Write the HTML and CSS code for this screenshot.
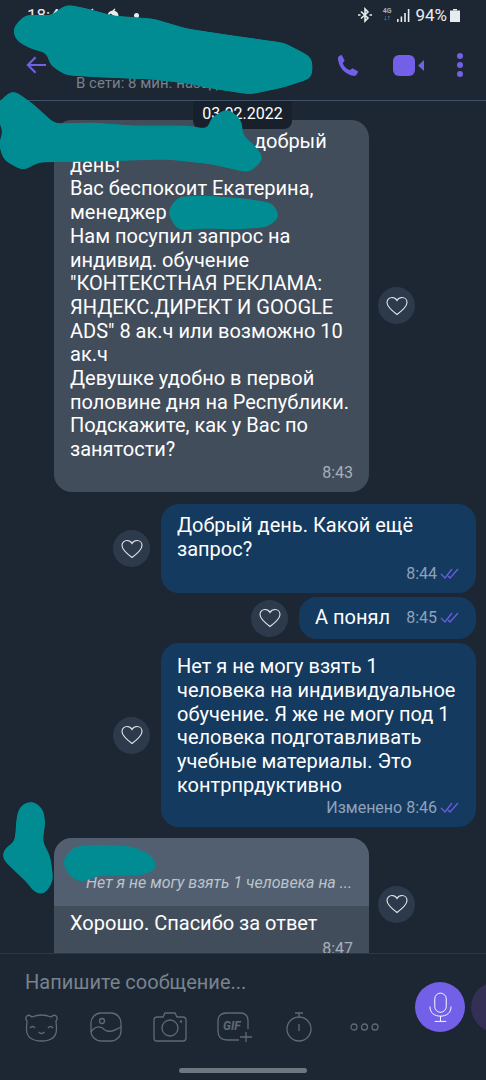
FILE: index.html
```html
<!DOCTYPE html>
<html>
<head>
    <title>Чат</title>
    <link rel="stylesheet" href="styles.css">
</head>
<body>
<div class="phone">
    <div class="top">
        <div class="status-bar">
            <div class="status-left">
                <span class="clock">18:43</span>
                <svg class="st-icon" viewBox="0 0 14 14"><circle cx="7" cy="8" r="5" fill="#e8ecf0"/><path d="M7 3 L9 1" stroke="#e8ecf0" stroke-width="1.5"/></svg>
                <svg class="st-icon" viewBox="0 0 14 14"><circle cx="7" cy="8" r="5.5" fill="#e8ecf0"/><path d="M4 6 L10 10" stroke="#1d2733" stroke-width="1.5"/><path d="M7 3 L9 1" stroke="#e8ecf0" stroke-width="1.5"/></svg>
                <span class="st-dot"></span>
            </div>
            <div class="status-right">
                <svg class="bt" viewBox="0 0 14 16" fill="none" stroke="#e8ecf0" stroke-width="1.6"><path d="M3 4.5 L10 11 L7 14 V2 L10 5 L3 11.5"/><path d="M0 8 H2.500 M11.500 8 H14"/></svg>
                <span class="net">4G<br>↓↑</span>
                <svg class="signal" viewBox="0 0 13 13" fill="#e8ecf0"><rect x="0" y="10" width="1.6" height="3"/><rect x="3.6" y="7.5" width="1.6" height="5.5"/><rect x="7.2" y="4" width="1.6" height="9"/><rect x="10.8" y="0" width="1.6" height="13"/></svg>
                <span class="percent">94%</span>
                <svg class="battery" viewBox="0 0 10 13" fill="#e8ecf0"><rect x="3" y="0" width="4" height="1.5"/><rect x="0" y="1.5" width="10" height="11.5"/></svg>
            </div>
        </div>
        <div class="app-bar">
            <svg class="back" viewBox="0 0 22 20" fill="none" stroke="#7360e8" stroke-width="2.2"><path d="M21 10 H2 M10 2 L2 10 L10 18"/></svg>
            <div class="contact">В сети: 8 мин. назад</div>
            <svg class="phone-icon" viewBox="0 0 22 22" fill="#7360e8"><path d="M1 3 C1 1.5 3.5 0 5 0 L8 6 L6 8.5 C7 12 10 15 13.5 16 L16 14 L22 17 C22 19 20 22 18 22 C8 21 1 12 1 3 Z"/></svg>
            <svg class="video-icon" viewBox="0 0 32 21" fill="#7360e8"><rect x="0" y="0" width="22" height="21" rx="6"/><path d="M25 10.5 L31 5 V16 Z"/></svg>
            <div class="dots"><span></span><span></span><span></span></div>
        </div>
    </div>

    <div class="chat">
        <div class="date-chip">03.02.2022</div>

        <div class="row in">
            <div class="bubble long">
                <div class="text"><span class="hidden-name"></span>добрый<br>день!<br>Вас беспокоит Екатерина,<br>менеджер<br>Нам посупил запрос на<br>индивид. обучение<br>"КОНТЕКСТНАЯ РЕКЛАМА:<br>ЯНДЕКС.ДИРЕКТ И GOOGLE<br>ADS" 8 ак.ч или возможно 10<br>ак.ч<br>Девушке удобно в первой<br>половине дня на Республики.<br>Подскажите, как у Вас по<br>занятости?</div>
                <div class="meta">8:43</div>
            </div>
            <button class="heart"><svg viewBox="0 0 22 20"><path d="M11 18.5 C5 14 1 10.5 1 6.5 C1 3.5 3.3 1.5 6 1.5 C8 1.5 10 2.6 11 4.5 C12 2.6 14 1.5 16 1.5 C18.7 1.5 21 3.5 21 6.5 C21 10.5 17 14 11 18.5 Z"/></svg></button>
        </div>

        <div class="row out gap-big">
            <button class="heart"><svg viewBox="0 0 22 20"><path d="M11 18.5 C5 14 1 10.5 1 6.5 C1 3.5 3.3 1.5 6 1.5 C8 1.5 10 2.6 11 4.5 C12 2.6 14 1.5 16 1.5 C18.7 1.5 21 3.5 21 6.5 C21 10.5 17 14 11 18.5 Z"/></svg></button>
            <div class="bubble">
                <div class="text">Добрый день. Какой ещё<br>запрос?</div>
                <div class="meta">8:44 <svg class="checks" viewBox="0 0 20 12"><path d="M1 7 L5 11 L12 2 M8 9 L10 11 L18 2"/></svg></div>
            </div>
        </div>

        <div class="row out gap-small">
            <button class="heart"><svg viewBox="0 0 22 20"><path d="M11 18.5 C5 14 1 10.5 1 6.5 C1 3.5 3.3 1.5 6 1.5 C8 1.5 10 2.6 11 4.5 C12 2.6 14 1.5 16 1.5 C18.7 1.5 21 3.5 21 6.5 C21 10.5 17 14 11 18.5 Z"/></svg></button>
            <div class="bubble short">
                <div class="text">А понял</div>
                <div class="meta">8:45 <svg class="checks" viewBox="0 0 20 12"><path d="M1 7 L5 11 L12 2 M8 9 L10 11 L18 2"/></svg></div>
            </div>
        </div>

        <div class="row out gap-small">
            <button class="heart"><svg viewBox="0 0 22 20"><path d="M11 18.5 C5 14 1 10.5 1 6.5 C1 3.5 3.3 1.5 6 1.5 C8 1.5 10 2.6 11 4.5 C12 2.6 14 1.5 16 1.5 C18.7 1.5 21 3.5 21 6.5 C21 10.5 17 14 11 18.5 Z"/></svg></button>
            <div class="bubble tall">
                <div class="text">Нет я не могу взять 1<br>человека на индивидуальное<br>обучение. Я же не могу под 1<br>человека подготавливать<br>учебные материалы. Это<br>контрпрдуктивно</div>
                <div class="meta">Изменено 8:46 <svg class="checks" viewBox="0 0 20 12"><path d="M1 7 L5 11 L12 2 M8 9 L10 11 L18 2"/></svg></div>
            </div>
        </div>

        <div class="row in gap-mid">
            <div class="bubble reply-bubble">
                <div class="quote">Нет я не могу взять 1 человека на ...</div>
                <div class="reply-body">
                    <div class="text">Хорошо. Спасибо за ответ</div>
                    <div class="meta">8:47</div>
                </div>
            </div>
            <button class="heart"><svg viewBox="0 0 22 20"><path d="M11 18.5 C5 14 1 10.5 1 6.5 C1 3.5 3.3 1.5 6 1.5 C8 1.5 10 2.6 11 4.5 C12 2.6 14 1.5 16 1.5 C18.7 1.5 21 3.5 21 6.5 C21 10.5 17 14 11 18.5 Z"/></svg></button>
        </div>
    </div>

    <div class="composer">
        <div class="composer-main">
            <div class="composer-left">
                <div class="placeholder">Напишите сообщение...</div>
                <div class="tools">
                    <svg class="tool bear" viewBox="0 0 33 30"><path d="M7 5 C3 1 -1 5 2 9 C2 11 1.500 13 1.500 17 C1.500 25 7 29 16.500 29 C26 29 31.500 25 31.500 17 C31.500 13 31 11 31 9 C34 5 30 1 26 5 C20 2.500 13 2.500 7 5 Z"/><path d="M5 16 Q7.500 13 10 16 M23 16 Q25.500 13 28 16 M13.500 20 Q16.500 23 19.500 20"/></svg>
                    <svg class="tool pic" viewBox="0 0 32 30"><rect x="1" y="1" width="30" height="28" rx="10"/><circle cx="12" cy="9" r="2.500"/><path d="M1 20 C6 13 11 14 15 18 C19 21 24 19 31 15"/></svg>
                    <svg class="tool cam" viewBox="0 0 34 30"><path d="M4 5 H10 L12 1 H22 L24 5 H30 Q33 5 33 8 V26 Q33 29 30 29 H4 Q1 29 1 26 V8 Q1 5 4 5 Z"/><circle cx="17" cy="16" r="8"/><circle cx="28" cy="9.500" r="0.600"/></svg>
                    <div class="gif-tool">
                        <span class="gif-text">GIF</span>
                        <svg class="gif-frame" viewBox="0 0 36 30"><path d="M31 17 V9 Q31 1 23 1 H10 Q1 1 1 9 V19 Q1 28 10 28 H22 M29 20 V30 M23 25 H35"/></svg>
                    </div>
                    <svg class="tool timer" viewBox="0 0 26 30"><circle cx="13" cy="17" r="12"/><path d="M13 5 V1 M9 1 H17 M13 12 V19"/></svg>
                    <svg class="tool more" viewBox="0 0 29 8"><circle cx="4" cy="4" r="3"/><circle cx="14.500" cy="4" r="3"/><circle cx="25" cy="4" r="3"/></svg>
                </div>
            </div>
            <div class="mic">
                <svg viewBox="0 0 24 32" fill="none" stroke="#fff" stroke-width="1"><rect x="6" y="1" width="12" height="20" rx="6"/><path d="M1 15 C1 22 6 25 12 25 C18 25 23 22 23 15 M12 25 V30 M6 30.500 H18"/></svg>
            </div>
            <div class="next-btn"></div>
        </div>
        <div class="home-bar"></div>
    </div>

    <svg class="scribbles" viewBox="0 0 486 1080">
        <defs>
            <filter id="marker" x="-10%" y="-10%" width="120%" height="120%">
                <feGaussianBlur stdDeviation="4"/>
                <feColorMatrix type="matrix" values="1 0 0 0 0  0 1 0 0 0  0 0 1 0 0  0 0 0 14 -6"/>
            </filter>
        </defs>
        <g filter="url(#marker)">
            <path d="M17 30 L27 19 L53 20 L67 9 L87 13 L113 20 L153 23 L187 33 L233 40 L283 47 L308 60 L308 75 L283 83 L250 90 L217 85 L187 79 L150 75 L100 73 L67 71 L53 62 L52 50 L33 45 L20 38 Z"/>
            <path d="M0 107 L13 95 L30 107 L53 128 L93 127 L133 130 L187 130 L217 135 L213 122 L227 113 L238 123 L238 137 L250 147 L259 158 L248 168 L213 160 L167 155 L100 157 L37 158 L23 166 L7 157 L3 143 L8 133 L2 117 Z"/>
            <path d="M172 212 L180 201 L205 200 L245 203 L270 207 L275 216 L265 223 L235 225 L205 224 L180 226 Z"/>
            <path class="thin" d="M19 817 L22 807 L32 803 L41 810 L43 823 L40 842 L48 857 L51 880 L43 893 L35 890 L29 881 L15 868 L4 857 L7 849 L17 844 Z"/>
            <path class="thin" d="M65 860 L75 849 L100 847 L133 849 L151 858 L155 868 L140 873 L100 873 L80 880 L69 872 Z"/>
        </g>
    </svg>
</div>
</body>
</html>
```

FILE: styles.css
```css
* {
    box-sizing: border-box;
}
html, body {
    margin: 0;
    padding: 0;
}
body {
    background-color: #1d2733;
    font-family: Roboto, "Liberation Sans", sans-serif;
    color: #fff;
}
.phone {
    position: relative;
    width: 486px;
    height: 1080px;
    display: flex;
    flex-direction: column;
    overflow: hidden;
}

/* top */
.top {
    height: 101px;
    flex-shrink: 0;
    border-bottom: 1px solid #3f5269;
}
.status-bar {
    height: 30px;
    padding: 0 26px 0 27px;
    display: flex;
    justify-content: space-between;
    align-items: center;
}
.status-left, .status-right {
    display: flex;
    align-items: center;
}
.clock {
    font-size: 17px;
    color: #e8ecf0;
    margin-right: 15px;
}
.st-icon {
    width: 14px;
    height: 14px;
    margin-right: 8px;
}
.st-dot {
    width: 5px;
    height: 5px;
    border-radius: 50%;
    background-color: #e8ecf0;
    margin-left: 6px;
}
.bt {
    width: 14px;
    height: 16px;
    margin-right: 11px;
}
.net {
    font-size: 7px;
    line-height: 7px;
    font-weight: bold;
    color: #a9b0b8;
    margin-right: 6px;
    text-align: center;
}
.signal {
    width: 13px;
    height: 13px;
    margin-right: 5px;
}
.percent {
    font-size: 17px;
    color: #e8ecf0;
    margin-right: 3px;
}
.battery {
    width: 10px;
    height: 13px;
}
.app-bar {
    height: 70px;
    padding: 0 23px 0 26px;
    display: flex;
    align-items: center;
    position: relative;
}
.back {
    width: 21px;
    height: 20px;
}
.contact {
    font-size: 15px;
    color: #77818d;
    margin-left: 29px;
    margin-top: 36px;
    flex: 1;
}
.phone-icon {
    width: 21px;
    height: 21px;
    margin-right: 35px;
}
.video-icon {
    width: 32px;
    height: 21px;
    margin-right: 32px;
}
.dots {
    display: flex;
    flex-direction: column;
    gap: 3px;
}
.dots span {
    display: block;
    width: 6px;
    height: 6px;
    border-radius: 50%;
    background-color: #7360e8;
}

/* messages */
.chat {
    flex: 1;
    position: relative;
    overflow: hidden;
    padding-top: 19px;
}
.date-chip {
    position: absolute;
    top: 0;
    left: 193px;
    width: 99px;
    height: 28px;
    background-color: #18212b;
    border-radius: 0 0 8px 8px;
    font-size: 16px;
    line-height: 26px;
    text-align: center;
    z-index: 2;
}
.row {
    display: flex;
    align-items: center;
}
.row.in {
    padding-left: 54px;
    gap: 9px;
}
.row.out {
    justify-content: flex-end;
    padding-right: 10px;
    gap: 11px;
}
.gap-big {
    margin-top: 12px;
}
.gap-small {
    margin-top: 4px;
}
.gap-mid {
    margin-top: 11px;
}
.bubble {
    width: 315px;
    flex-shrink: 0;
    padding: 10px 16px 9px;
    border-radius: 18px;
}
.in .bubble {
    background-color: #424d5c;
}
.out .bubble {
    background-color: #153a60;
}
.text {
    font-size: 20px;
    line-height: 23.7px;
}
.hidden-name {
    display: inline-block;
    width: 184px;
}
.meta {
    font-size: 16px;
    line-height: 20px;
    color: #8fa2ba;
    text-align: right;
    margin-top: 3px;
}
.in .meta {
    color: #a7afb9;
}
.long .meta {
    margin-top: 1px;
}
.checks {
    width: 20px;
    height: 12px;
    margin-left: -1px;
    fill: none;
    stroke: #6a5ce0;
    stroke-width: 1.3;
}
.bubble.tall {
    padding-top: 12px;
}
.tall .meta {
    margin-top: 1px;
}
.bubble.short {
    width: 177px;
    height: 42px;
    padding: 0 16px;
    display: flex;
    align-items: center;
    justify-content: space-between;
}
.short .meta {
    margin-top: 0;
}
.heart {
    width: 37px;
    height: 37px;
    padding: 0;
    border: none;
    border-radius: 50%;
    background-color: #2c3a4b;
    display: flex;
    align-items: center;
    justify-content: center;
    flex-shrink: 0;
}
.heart svg {
    width: 22px;
    height: 20px;
    fill: none;
    stroke: #e4e8ec;
    stroke-width: 1.1;
}
.bubble.reply-bubble {
    padding: 0;
    overflow: hidden;
    height: 132px;
}
.quote {
    height: 68px;
    background-color: #525f70;
    padding: 36px 0 0 32px;
    font-size: 16px;
    line-height: 18px;
    font-style: italic;
    color: #bcc3cc;
}
.reply-body {
    padding: 6px 16px 0;
}
.reply-body .meta {
    margin-top: 3px;
}

/* bottom */
.composer {
    height: 127px;
    flex-shrink: 0;
    border-top: 1px solid #2b3947;
    background-color: #1d2733;
    padding-left: 25px;
    position: relative;
    z-index: 3;
}
.composer-main {
    display: flex;
    align-items: flex-start;
}
.composer-left {
    width: 390px;
    flex-shrink: 0;
}
.placeholder {
    font-size: 20px;
    line-height: 22px;
    color: #78838f;
    padding-top: 17px;
}
.tools {
    display: flex;
    align-items: center;
    margin-top: 19px;
    height: 30px;
}
.tool {
    fill: none;
    stroke: #5d6a78;
    stroke-width: 1.3;
    flex-shrink: 0;
}
.bear {
    width: 33px;
    height: 30px;
    margin-right: 32px;
}
.pic {
    width: 32px;
    height: 30px;
    margin-right: 31px;
}
.cam {
    width: 34px;
    height: 30px;
    margin-right: 30px;
}
.gif-tool {
    position: relative;
    width: 36px;
    height: 30px;
    margin-right: 33px;
    flex-shrink: 0;
}
.gif-text {
    position: absolute;
    top: 7px;
    left: 6px;
    font-size: 12px;
    line-height: 14px;
    font-weight: bold;
    font-style: italic;
    color: #5d6a78;
}
.gif-frame {
    width: 36px;
    height: 30px;
    fill: none;
    stroke: #5d6a78;
    stroke-width: 1.3;
}
.timer {
    width: 26px;
    height: 30px;
    margin-right: 38px;
}
.more {
    width: 29px;
    height: 8px;
}
.mic {
    width: 50px;
    height: 50px;
    border-radius: 50%;
    background-color: #7360e8;
    margin-top: 28px;
    display: flex;
    align-items: center;
    justify-content: center;
    flex-shrink: 0;
}
.mic svg {
    width: 23px;
    height: 31px;
}
.next-btn {
    width: 50px;
    height: 50px;
    border-radius: 50%;
    background-color: #332f55;
    margin-top: 28px;
    margin-left: 6px;
    flex-shrink: 0;
}
.home-bar {
    position: absolute;
    left: 179px;
    bottom: 7px;
    width: 128px;
    height: 5px;
    border-radius: 3px;
    background-color: #6e7780;
}

/* painted over the screenshot */
.scribbles {
    position: absolute;
    top: 0;
    left: 0;
    width: 486px;
    height: 1080px;
    z-index: 5;
    pointer-events: none;
    fill: #008c92;
    stroke: #008c92;
    stroke-width: 8;
    stroke-linejoin: round;
}
.scribbles .thin {
    stroke-width: 4;
}
```
